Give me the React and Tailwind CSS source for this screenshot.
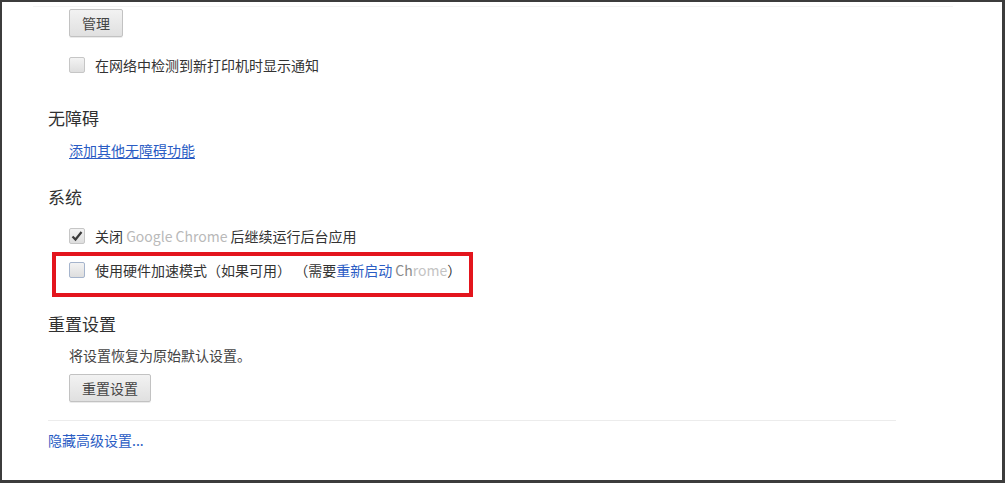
import React from "react";

const font = { fontFamily: '"Noto Sans CJK SC", "Liberation Sans", sans-serif' };

const Checkbox = ({ checked = false, focus = false }) => (
  <span
    className={
      "relative flex h-[16px] w-[16px] shrink-0 items-center justify-center rounded-[2px] border bg-gradient-to-b from-[#f3f3f3] to-[#dedede] " +
      (focus ? "border-[#a5b4cc]" : "border-[#c6c6c6]")
    }
  >
    {checked && (
      <svg viewBox="0 0 12 12" className="h-[12px] w-[12px]">
        <path d="M1.5 6.5 L4.5 9.5 L10.5 2" fill="none" stroke="#3a3a3a" strokeWidth="2.2" />
      </svg>
    )}
  </span>
);

const Button = ({ children }) => (
  <button className="h-[28px] rounded-[2px] border border-[#c2c2c2] bg-gradient-to-b from-[#f2f2f2] to-[#e0e0e0] px-[12px] text-[14px] leading-[26px] text-[#444] shadow-[0_1px_0_rgba(0,0,0,0.08)]">
    {children}
  </button>
);

const Heading = ({ children, className = "" }) => (
  <h3 className={"ml-[46px] h-[24px] text-[17px] leading-[24px] text-[#303030] " + className}>{children}</h3>
);

export default function App() {
  return (
    <div
      className="h-[483px] w-[1005px] overflow-hidden border-t-[2px] border-l-[2px] border-r-[3px] border-b-[3px] border-[#3c3c3c] bg-white"
      style={font}
    >
      <div className="relative flex h-full flex-col">
        <div className="ml-[31px] h-[1px] w-[920px] bg-[#f4f4f4] mt-[4px]" />
        <div className="ml-[67px] mt-[2px]">
          <Button>管理</Button>
        </div>
        <label className="ml-[67px] mt-[18px] flex h-[20px] items-center gap-[10px] text-[14px] text-[#333]">
          <Checkbox />
          <span>在网络中检测到新打印机时显示通知</span>
        </label>

        <Heading className="mt-[31px]">无障碍</Heading>
        <a className="ml-[67px] mt-[10px] h-[20px] text-[14px] leading-[20px] text-[#2a5cc4] underline underline-offset-2 w-fit">
          添加其他无障碍功能
        </a>

        <Heading className="mt-[25px]">系统</Heading>
        <label className="ml-[67px] mt-[17px] flex h-[20px] items-center gap-[10px] text-[14px] text-[#333]">
          <Checkbox checked />
          <span>
            关闭 <span className="text-[#b9b9b9]">Google Chrome</span> 后继续运行后台应用
          </span>
        </label>
        <div className="relative ml-[67px] mt-[14px] h-[20px]">
          <label className="flex h-[20px] items-center gap-[10px] text-[14px] text-[#333]">
            <Checkbox focus />
            <span>
              使用硬件加速模式（如果可用） （需要<span className="text-[#2a5cc4]">重新启动</span>{" "}
              <span className="text-[#8a8a8a]">Ch</span>
              <span className="text-[#c4c4c4]">rome</span>）
            </span>
          </label>
          <span className="pointer-events-none absolute left-[-17px] top-[-8px] h-[45px] w-[421px] border-[4px] border-[#e3151d]" />
        </div>

        <Heading className="mt-[32px]">重置设置</Heading>
        <p className="ml-[67px] mt-[9px] h-[20px] text-[14px] leading-[20px] text-[#444]">将设置恢复为原始默认设置。</p>
        <div className="ml-[67px] mt-[9px]">
          <Button>重置设置</Button>
        </div>
        <div className="ml-[46px] mt-[18px] h-[1px] w-[848px] bg-[#ececec]" />
        <a className="ml-[46px] mt-[9px] h-[20px] w-fit text-[14px] leading-[20px] text-[#2a5cc4]">隐藏高级设置...</a>
      </div>
    </div>
  );
}
